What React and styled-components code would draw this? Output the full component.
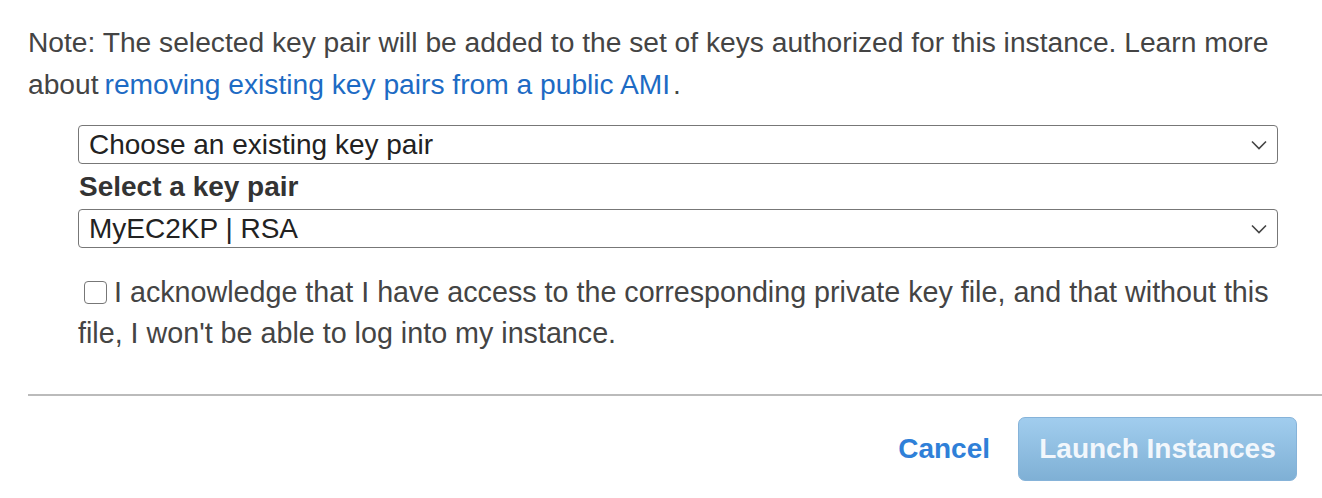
import React from 'react'
import styled, { createGlobalStyle } from 'styled-components'

const GlobalStyle = createGlobalStyle`
  body {
    margin: 0;
    background: #fff;
    font-family: "Liberation Sans", Arial, sans-serif;
    color: #444;
  }
`

const Panel = styled.div`
  padding: 21px 0 0 28px;
`

const Note = styled.p`
  margin: 0;
  font-size: 28.2px;
  line-height: 42px;
  padding-right: 10px;
`

const Link = styled.a`
  color: #1d6bc4;
  text-decoration: none;
  margin-left: 6px;
  margin-right: 3px;
`

const Fields = styled.div`
  margin: 20px 44px 0 50px;
`

const SelectBox = styled.div`
  position: relative;
  height: 39px;
  box-sizing: border-box;
  border: 1.5px solid #777;
  border-radius: 4px;
  display: flex;
  align-items: center;
  padding: 0 40px 0 10px;
  font-size: 28px;
  color: #222;
`

const Chevron = styled.svg`
  position: absolute;
  right: 10px;
  top: 50%;
  margin-top: -5px;
`

const Label = styled.div`
  font-weight: bold;
  font-size: 28px;
  line-height: 30px;
  margin: 8px 0 7px 1px;
  color: #333;
`

const Ack = styled.p`
  margin: 24px 0 0;
  font-size: 28.7px;
  line-height: 41px;
  color: #444;
`

const Box = styled.span`
  display: inline-block;
  width: 21px;
  height: 21px;
  border: 1.5px solid #777;
  border-radius: 4px;
  vertical-align: -2px;
  margin: 0 7px 0 6px;
`

const Divider = styled.hr`
  margin: 40px 0 0;
  border: 0;
  border-top: 2px solid #bbb;
`

const Footer = styled.div`
  display: flex;
  justify-content: flex-end;
  align-items: center;
  gap: 28px;
  padding: 21px 25px 0 0;
`

const Cancel = styled.a`
  color: #2f80d8;
  font-weight: bold;
  font-size: 28px;
`

const Launch = styled.button`
  height: 64px;
  width: 279px;
  border: 1.5px solid #86b3d9;
  border-radius: 7px;
  background: linear-gradient(#a1cdee, #7fb0d5);
  color: #f2f7fc;
  font-family: "Liberation Sans", Arial, sans-serif;
  font-weight: bold;
  font-size: 28px;
`

const Select = ({ children }) => (
  <SelectBox>
    {children}
    <Chevron width="16" height="10" viewBox="0 0 16 10">
      <polyline points="1,1.5 8,8.5 15,1.5" fill="none" stroke="#444" strokeWidth="1.6" />
    </Chevron>
  </SelectBox>
)

const App = () => (
  <>
    <GlobalStyle />
    <Panel>
      <Note>
        Note: The selected key pair will be added to the set of keys authorized for this instance. Learn more about
        <Link>removing existing key pairs from a public AMI</Link>.
      </Note>
      <Fields>
        <Select>Choose an existing key pair</Select>
        <Label>Select a key pair</Label>
        <Select>MyEC2KP | RSA</Select>
        <Ack>
          <Box />I acknowledge that I have access to the corresponding private key file, and that without this file, I won't be able to log into my instance.
        </Ack>
      </Fields>
      <Divider />
      <Footer>
        <Cancel>Cancel</Cancel>
        <Launch>Launch Instances</Launch>
      </Footer>
    </Panel>
  </>
)

export default App
